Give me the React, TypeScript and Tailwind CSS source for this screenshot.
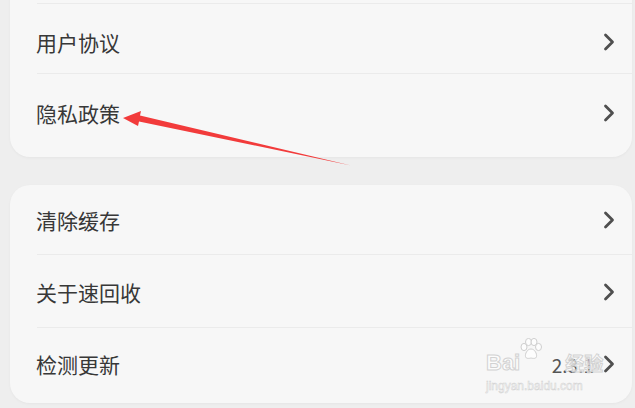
import React from 'react';

const Chevron = () => (
  <svg width="14" height="20" viewBox="0 0 14 20" className="shrink-0">
    <path d="M3.5 3 L10.5 10 L3.5 17" fill="none" stroke="#4f4f4f" strokeWidth="2.8" strokeLinecap="round" strokeLinejoin="round" />
  </svg>
);

type RowProps = { label?: string; h: string; pt?: string; divider?: boolean; extra?: React.ReactNode };

const Row = ({ label, h, pt = '', divider = true, extra }: RowProps) => (
  <div className={`relative flex ${h}`}>
    {divider && <div className="absolute left-[27px] right-0 top-0 h-px bg-[#ebebeb]" />}
    {label && (
      <div className={`flex w-full items-center justify-between pl-[26px] pr-[16px] ${pt}`}>
        <span className="text-[21px] text-[#383838] leading-none">{label}</span>
        <div className="flex items-center gap-[8px]">
          {extra}
          <Chevron />
        </div>
      </div>
    )}
  </div>
);

const Paw = () => (
  <svg width="24" height="22" viewBox="0 0 24 22" className="shrink-0">
    <g fill="rgba(255,255,255,0.75)" stroke="#cfcfcf" strokeWidth="1">
      <ellipse cx="5" cy="9" rx="3" ry="3.6" />
      <ellipse cx="9.5" cy="4" rx="3" ry="3.6" />
      <ellipse cx="15" cy="4" rx="3" ry="3.6" />
      <ellipse cx="19.5" cy="9" rx="3" ry="3.6" />
      <path d="M12 11 C8 11 6 16 6.5 18.5 C7 21 10 20.5 12 20 C14 20.5 17 21 17.5 18.5 C18 16 16 11 12 11 Z" />
    </g>
  </svg>
);

const App: React.FC = () => {
  return (
    <div
      className="relative w-[635px] h-[408px] overflow-hidden bg-[#eeeeee] pl-[10px] pr-[3px]"
      style={{ fontFamily: '"Noto Sans CJK SC", "Noto Sans", sans-serif' }}
    >
      <div className="-mt-[35px] rounded-[20px] bg-[#f7f7f7] shadow-[0_1px_3px_rgba(0,0,0,0.04)]">
        <Row h="h-[38px]" divider={false} />
        <Row label="用户协议" h="h-[70px]" pt="pt-[8px]" />
        <Row label="隐私政策" h="h-[84px]" pt="pb-[4px]" />
      </div>

      <div className="mt-[28px] rounded-[20px] bg-[#f7f7f7] shadow-[0_1px_3px_rgba(0,0,0,0.04)]">
        <Row label="清除缓存" h="h-[69px]" divider={false} pt="pt-[1px]" />
        <Row label="关于速回收" h="h-[73px]" pt="pt-[3px]" />
        <Row
          label="检测更新"
          h="h-[76px]"
          pt="pb-[2px]"
          extra={<span className="text-[19px] text-[#555] leading-none">2.3.1</span>}
        />
      </div>

      {/* watermark */}
      <div
        className="pointer-events-none absolute left-[486px] top-[338px] flex flex-col items-start"
        style={{ fontFamily: '"Liberation Sans", "Noto Sans CJK SC", sans-serif' }}
      >
        <div className="flex items-end leading-none">
          <span className="text-[22px] font-bold text-white/70 [-webkit-text-stroke:1px_#d2d2d2]">Bai</span>
          <div className="mb-[14px] -ml-[1px]">
            <Paw />
          </div>
          <span className="ml-[22px] text-[19px] font-bold text-white/60 [-webkit-text-stroke:1px_#d2d2d2]">经验</span>
        </div>
        <span className="mt-[6px] text-[12px] leading-none text-white/80 [-webkit-text-stroke:0.5px_#d0d0d0]">
          jingyan.baidu.com
        </span>
      </div>

      <svg className="pointer-events-none absolute left-0 top-0" width="635" height="408">
        <polygon points="123,118 141,111 140,115.5 351,165.5 139,121.5 138,126" fill="#f23b3b" />
      </svg>
    </div>
  );
};

export default App;
